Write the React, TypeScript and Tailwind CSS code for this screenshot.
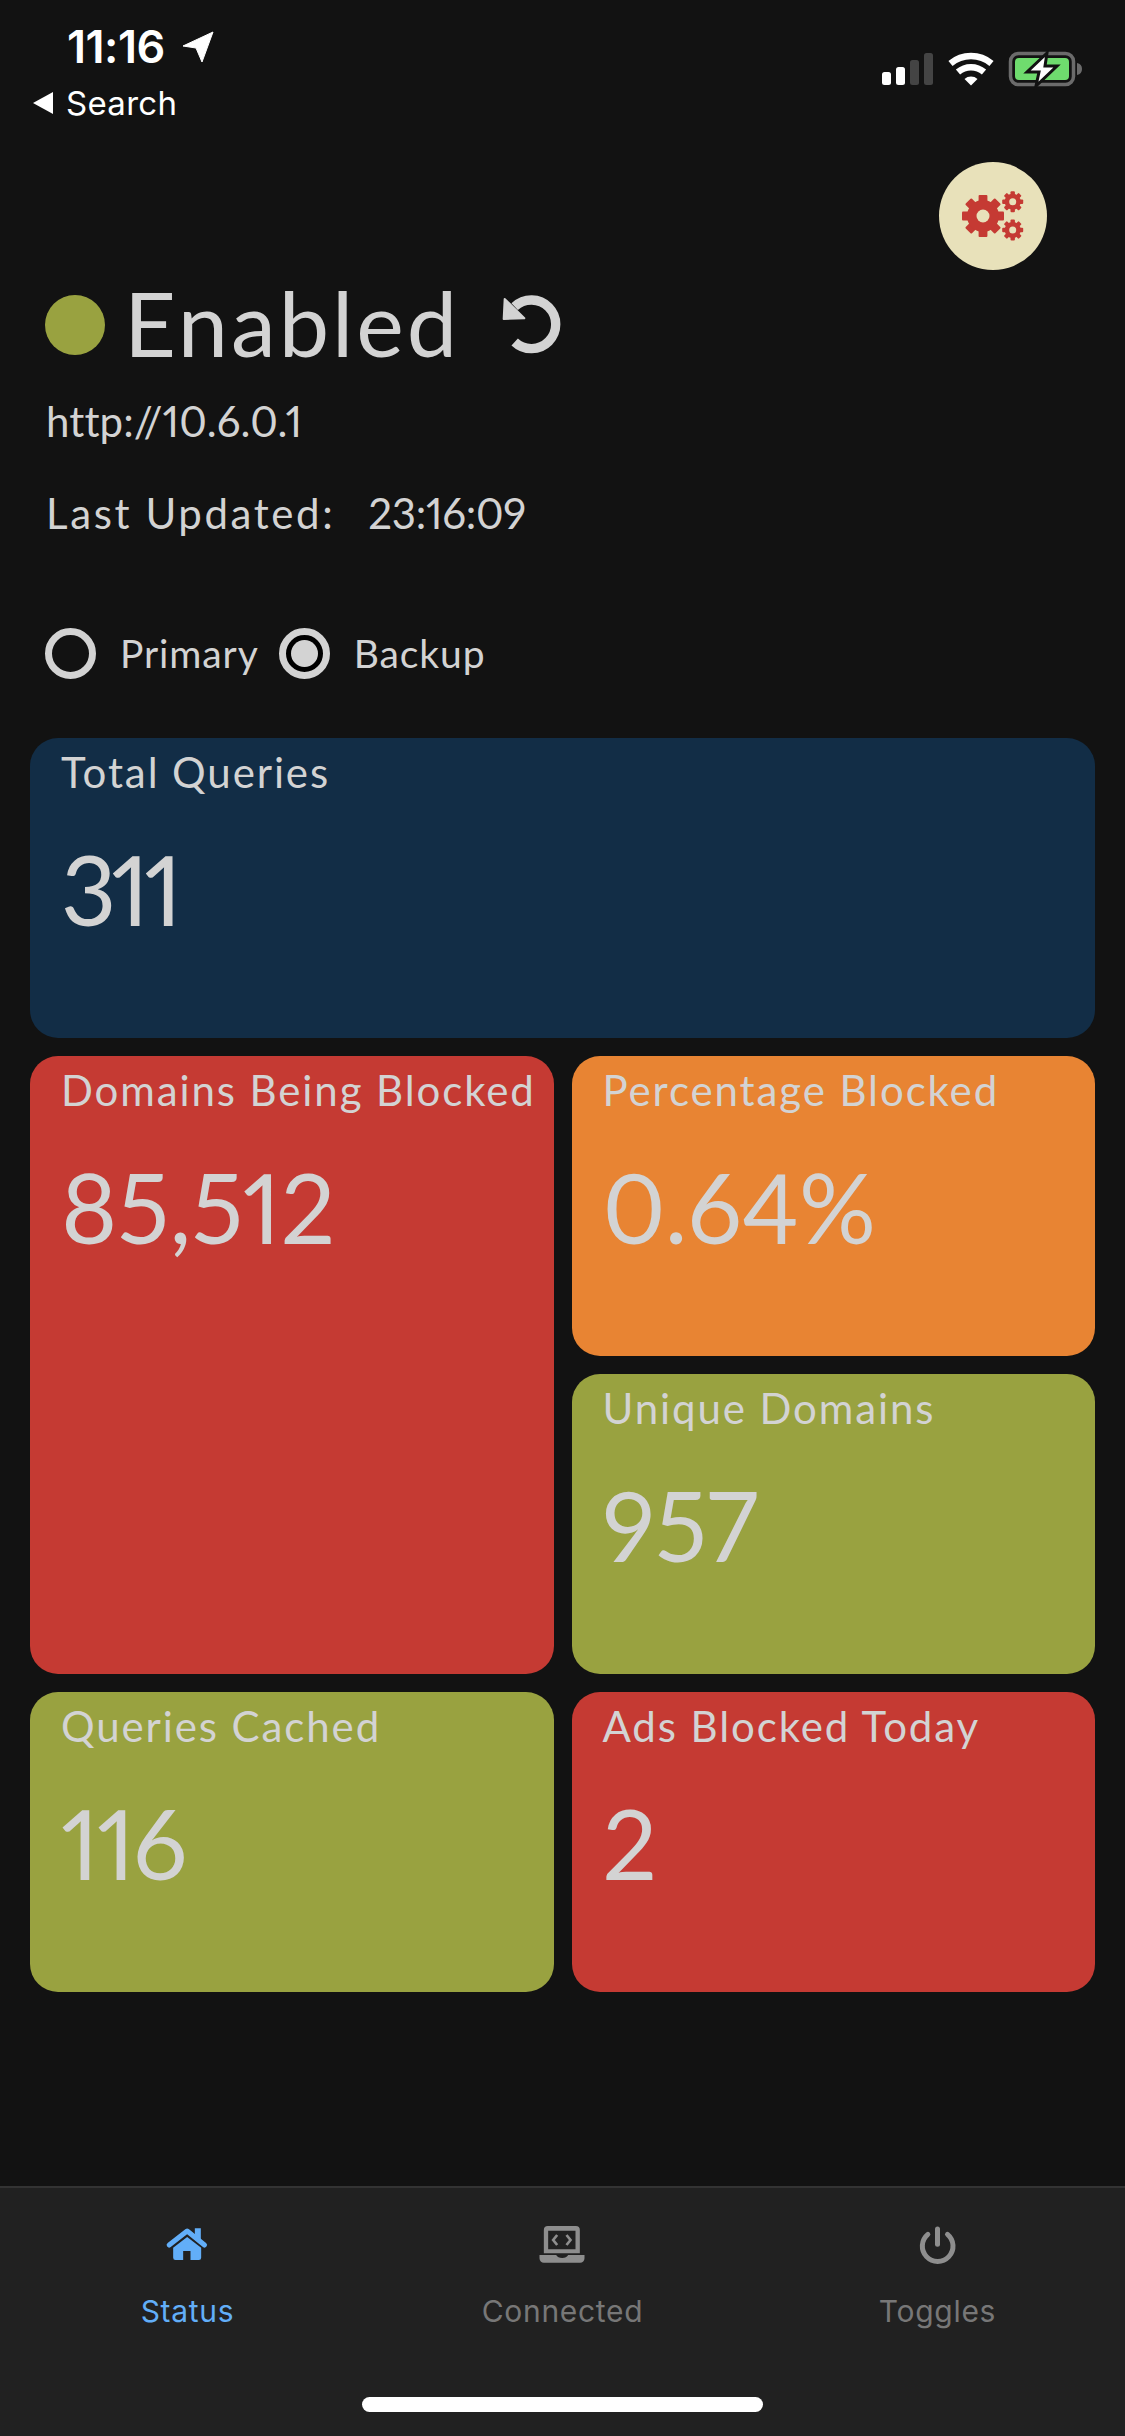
import React from 'react';

const labelFont = "font-['Lato','Liberation_Sans',sans-serif]";
const systemFont = "font-['Inter','Liberation_Sans',sans-serif]";

function Gear({ cx, cy, outer, body, hole }: { cx: number; cy: number; outer: number; body: number; hole: number }) {
  const toothWidth = outer * 0.42;
  return (
    <g>
      {Array.from({ length: 8 }).map((_, i) => (
        <rect
          key={i}
          x={cx - toothWidth / 2}
          y={cy - outer}
          width={toothWidth}
          height={outer}
          rx={1}
          fill="#c53a33"
          transform={`rotate(${i * 45} ${cx} ${cy})`}
        />
      ))}
      <circle cx={cx} cy={cy} r={body} fill="#c53a33" />
      <circle cx={cx} cy={cy} r={hole} fill="#e8e1ba" />
    </g>
  );
}

function StatusIcons() {
  return (
    <svg width="210" height="40" viewBox="880 50 210 40">
      <rect x="882" y="72" width="9" height="13" rx="2.5" fill="#fff" />
      <rect x="896" y="67" width="9" height="18" rx="2.5" fill="#fff" />
      <rect x="910" y="60" width="9" height="25" rx="2.5" fill="#444" />
      <rect x="924" y="53" width="9" height="32" rx="2.5" fill="#444" />
      <g fill="none" stroke="#fff" strokeWidth="6.5">
        <path d="M950.5 63.5 A32 32 0 0 1 991.5 63.5" />
        <path d="M958 72 A20 20 0 0 1 984 72" />
      </g>
      <path d="M964.5 79 A10 10 0 0 1 977.5 79 L971 85.5 Z" fill="#fff" />
      <rect x="1010.5" y="53.5" width="63" height="31" rx="8" fill="none" stroke="#6b6b6b" strokeWidth="3.5" />
      <rect x="1015" y="58" width="54" height="22" rx="4" fill="#6fdc6e" />
      <path d="M1077 63 A6 6 0 0 1 1082 69 A6 6 0 0 1 1077 75 Z" fill="#6b6b6b" />
      <path d="M1047 53 L1027 72 H1039 L1036 86 L1057 66 H1045 Z" fill="#fff" stroke="#121212" strokeWidth="3" strokeLinejoin="miter" />
    </svg>
  );
}

function Card({ title, value, color, className = '', valueClass = '' }: { title: string; value: string; color: string; className?: string; valueClass?: string }) {
  return (
    <div className={`rounded-[28px] px-[31px] pt-[9px] text-[#d3d3d3] ${color} ${className}`}>
      <div className="text-[42px] leading-[50px] tracking-[1.9px] whitespace-nowrap">{title}</div>
      <div className={`mt-[37px] text-[96px] leading-[110px] proportional-nums ${valueClass}`}>{value}</div>
    </div>
  );
}

function Radio({ label, selected }: { label: string; selected?: boolean }) {
  return (
    <div className="flex items-center">
      <div className={`w-[51px] h-[51px] rounded-full border-[7px] border-[#d3d3d3] flex items-center justify-center ${selected ? 'bg-black' : ''}`}>
        {selected && <div className="w-[27px] h-[27px] rounded-full bg-[#d3d3d3]" />}
      </div>
      <span className="ml-[24px] text-[39px] leading-[51px] tracking-[0.9px]">{label}</span>
    </div>
  );
}

export default function App() {
  return (
    <div className={`w-[1125px] h-[2436px] flex flex-col bg-[#121212] ${labelFont}`}>
      <div className="h-[162px] flex justify-between text-white">
        <div className="pl-[33px] pt-[22px]">
          <div className={`flex items-center pl-[34px] h-[50px] ${systemFont}`}>
            <span className="text-[45px] leading-[50px] font-semibold tracking-[-0.5px]">11:16</span>
            <svg className="ml-[17px]" width="32" height="32" viewBox="0 0 32 32">
              <path d="M31 1 L1 15 L14 17 L20 31 Z" fill="#fff" stroke="#fff" strokeWidth="1" strokeLinejoin="round" />
            </svg>
          </div>
          <div className={`flex items-center h-[40px] mt-[11px] ${systemFont}`}>
            <svg width="20" height="22" viewBox="0 0 20 22">
              <path d="M20 0 V22 L0 11 Z" fill="#fff" />
            </svg>
            <span className="ml-[13px] text-[33px] leading-[40px] tracking-[0.3px]">Search</span>
          </div>
        </div>
        <div className="pt-[50px] pr-[35px]">
          <StatusIcons />
        </div>
      </div>

      <div className="flex justify-end pr-[78px]">
        <div className="w-[108px] h-[108px] rounded-full bg-[#e8e1ba]">
          <svg width="108" height="108" viewBox="0 0 108 108">
            <Gear cx={44} cy={54} outer={21} body={16} hole={6.5} />
            <Gear cx={73.7} cy={39.7} outer={10.5} body={8} hole={3.5} />
            <Gear cx={73.7} cy={68} outer={10.5} body={8} hole={3.5} />
          </svg>
        </div>
      </div>

      <div className="pl-[45px] text-[#d3d3d3]">
        <div className="mt-[25px] flex items-center h-[60px]">
          <div className="w-[60px] h-[60px] rounded-full bg-[#99a240]" />
          <span className="ml-[19px] pb-[6px] text-[90px] leading-[60px] tracking-[3px]">Enabled</span>
          <svg className="ml-[32px]" width="80" height="80" viewBox="0 0 240 240">
            <path d="M68 65 A73 73 0 1 1 68 171" fill="none" stroke="#d3d3d3" strokeWidth="28" />
            <path d="M38 42 L97 100 L35 102 Z" fill="#d3d3d3" stroke="#d3d3d3" strokeWidth="6" strokeLinejoin="round" />
          </svg>
        </div>
        <div className="mt-[41px] pl-[1px] text-[42px] leading-[50px] proportional-nums tracking-[0.1px]">http://10.6.0.1</div>
        <div className="mt-[42px] pl-[1px] flex text-[42px] leading-[50px]">
          <span className="tracking-[2.6px]">Last Updated:</span>
          <span className="ml-[33px] proportional-nums tracking-[-0.3px]">23:16:09</span>
        </div>
        <div className="mt-[90px] flex gap-[20px]">
          <Radio label="Primary" />
          <Radio label="Backup" selected />
        </div>
      </div>

      <div className="mt-[59px] mx-[30px] grid grid-cols-2 grid-rows-[300px_300px_300px_300px] gap-[18px]">
        <Card title="Total Queries" value="311" color="bg-[#122d46]" className="col-span-2" valueClass="tracking-[-5px]" />
        <Card title="Domains Being Blocked" value="85,512" color="bg-[#c53a33]" className="row-span-2" />
        <Card title="Percentage Blocked" value="0.64%" color="bg-[#e88433]" />
        <Card title="Unique Domains" value="957" color="bg-[#99a240]" />
        <Card title="Queries Cached" value="116" color="bg-[#99a240]" valueClass="tracking-[-2px]" />
        <Card title="Ads Blocked Today" value="2" color="bg-[#c53a33]" />
      </div>

      <div className={`mt-auto h-[250px] bg-[#212121] border-t-[2px] border-[#333] flex flex-col ${systemFont}`}>
        <div className="flex pt-[27px]">
          <div className="w-[375px] flex flex-col items-center text-[#62aef8]">
            <svg width="70" height="60" viewBox="7.5 0 210 180">
              <path d="M133 40 H151 V80 L133 66 Z" fill="#62aef8" />
              <path d="M56 90 L110 48 L162 90" fill="none" stroke="#62aef8" strokeWidth="15" strokeLinecap="round" strokeLinejoin="round" />
              <path d="M110 66 L152 98 V128 A7 7 0 0 1 145 135 H120 V108 H98 V135 H75 A7 7 0 0 1 68 128 V98 Z" fill="#62aef8" />
            </svg>
            <span className="mt-[16px] text-[30px] leading-[40px] tracking-[0.7px]">Status</span>
          </div>
          <div className="w-[375px] flex flex-col items-center text-[#777]">
            <svg width="70" height="60" viewBox="7.5 0 210 180">
              <path fillRule="evenodd" d="M67 33 H151 A12 12 0 0 1 163 45 V115 H55 V45 A12 12 0 0 1 67 33 Z M68 47 V103 H150 V47 Z" fill="#8e8e8e" />
              <path d="M95 60 L83 75 L95 90 M123 60 L135 75 L123 90" fill="none" stroke="#8e8e8e" strokeWidth="8" />
              <path d="M42 120 H92 Q97 129 110 129 Q123 129 128 120 H177 V130 A13 13 0 0 1 164 143 H55 A13 13 0 0 1 42 130 Z" fill="#8e8e8e" />
            </svg>
            <span className="mt-[16px] text-[30px] leading-[40px] tracking-[0.7px]">Connected</span>
          </div>
          <div className="w-[375px] flex flex-col items-center text-[#777]">
            <svg width="70" height="60" viewBox="7.5 0 210 180">
              <path d="M82 58 A46 46 0 1 0 141 58" fill="none" stroke="#8e8e8e" strokeWidth="15" strokeLinecap="round" />
              <path d="M111 42 V88" fill="none" stroke="#8e8e8e" strokeWidth="15" strokeLinecap="round" />
            </svg>
            <span className="mt-[16px] text-[30px] leading-[40px] tracking-[0.7px]">Toggles</span>
          </div>
        </div>
        <div className="mt-auto mb-[24px] mx-auto w-[401px] h-[15px] rounded-full bg-white" />
      </div>
    </div>
  );
}
